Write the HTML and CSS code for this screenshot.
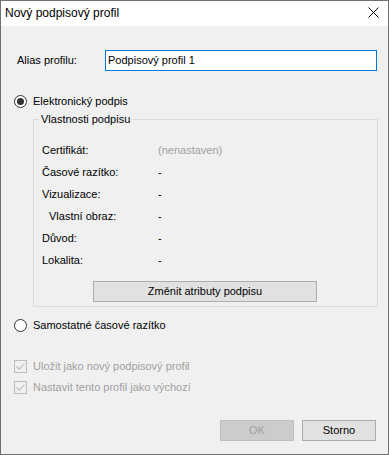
FILE: index.html
```html
<!DOCTYPE html>
<html lang="cs">
  <head>
    <meta charset="UTF-8" />
    <meta name="viewport" content="width=device-width, initial-scale=1.0" />
    <title>Nový podpisový profil</title>
    <link rel="stylesheet" href="styles.css">
  </head>
  <body>
    <div class="window">
      <div class="titlebar">
        <span class="title">Nový podpisový profil</span>
        <svg class="close" width="11" height="11" viewBox="0 0 11 11">
          <path d="M0.5 0.5 L10.5 10.5 M10.5 0.5 L0.5 10.5" stroke="#000" stroke-width="1" fill="none"/>
        </svg>
      </div>

      <div class="content">
        <div class="alias-row">
          <label class="alias-label">Alias profilu:</label>
          <div class="textbox">Podpisový profil 1</div>
        </div>

        <div class="option-row first-radio">
          <span class="radio checked"></span>
          <span>Elektronický podpis</span>
        </div>

        <fieldset class="group">
          <legend>Vlastnosti podpisu</legend>
          <div class="props">
            <span>Certifikát:</span><span class="muted">(nenastaven)</span>
            <span>Časové razítko:</span><span>-</span>
            <span>Vizualizace:</span><span>-</span>
            <span class="indent">Vlastní obraz:</span><span>-</span>
            <span>Důvod:</span><span>-</span>
            <span>Lokalita:</span><span>-</span>
          </div>
          <div class="group-actions">
            <div class="btn wide">Změnit atributy podpisu</div>
          </div>
        </fieldset>

        <div class="option-row second-radio">
          <span class="radio"></span>
          <span>Samostatné časové razítko</span>
        </div>

        <div class="option-row check-row first-check disabled">
          <span class="checkbox">
            <svg width="11" height="11" viewBox="0 0 11 11">
              <path d="M1.5 5.5 L4.2 8.2 L9.5 2.5" stroke="#bcbcbc" stroke-width="1.1" fill="none"/>
            </svg>
          </span>
          <span>Uložit jako nový podpisový profil</span>
        </div>

        <div class="option-row check-row second-check disabled">
          <span class="checkbox">
            <svg width="11" height="11" viewBox="0 0 11 11">
              <path d="M1.5 5.5 L4.2 8.2 L9.5 2.5" stroke="#bcbcbc" stroke-width="1.1" fill="none"/>
            </svg>
          </span>
          <span>Nastavit tento profil jako výchozí</span>
        </div>

        <div class="dialog-buttons">
          <div class="btn disabled-btn">OK</div>
          <div class="btn">Storno</div>
        </div>
      </div>
    </div>
  </body>
</html>
```

FILE: styles.css
```css
body {
  margin: 0;
  font-family: "Liberation Sans", Arial, sans-serif;
  font-size: 11px;
  color: #000;
}

.window {
  width: 389px;
  height: 455px;
  box-sizing: border-box;
  border: 1px solid #707070;
  display: flex;
  flex-direction: column;
  background: #f0f0f0;
}

.titlebar {
  height: 25px;
  background: #fff;
  display: flex;
  align-items: center;
  justify-content: space-between;
  padding: 0 9px 0 4px;
  flex-shrink: 0;
}

.title {
  font-size: 12px;
  line-height: 16px;
  margin-top: -1px;
}

.close {
  margin-top: -2px;
}

.content {
  flex: 1;
  display: flex;
  flex-direction: column;
  line-height: 13px;
}

.alias-row {
  display: flex;
  align-items: center;
  margin: 24px 0 0 16px;
}

.alias-label {
  width: 88px;
}

.textbox {
  width: 272px;
  height: 21px;
  box-sizing: border-box;
  border: 1px solid #0078d7;
  background: #fff;
  padding: 3px 0 0 2px;
}

.option-row {
  display: flex;
  align-items: center;
  height: 13px;
  margin-left: 13px;
  gap: 6px;
}

.first-radio {
  margin-top: 24px;
}

.second-radio {
  margin-top: 12px;
}

.radio {
  width: 13px;
  height: 13px;
  box-sizing: border-box;
  border: 1px solid #333;
  border-radius: 50%;
  background: #fff;
  display: flex;
  align-items: center;
  justify-content: center;
}

.radio.checked::after {
  content: "";
  width: 7px;
  height: 7px;
  border-radius: 50%;
  background: #333;
}

.group {
  margin: 5px 0 0 32px;
  width: 345px;
  box-sizing: border-box;
  border: 1px solid #dcdcdc;
  padding: 0 0 4px 8px;
  min-width: 0;
}

.group legend {
  padding: 0 2px;
  margin-left: -3px;
  line-height: 13px;
}

.props {
  display: grid;
  grid-template-columns: 116px auto;
  grid-auto-rows: 22px;
  align-items: center;
  margin-top: 13px;
}

.indent {
  padding-left: 7px;
}

.muted {
  color: #a0a0a0;
}

.group-actions {
  display: flex;
  justify-content: center;
  margin: 10px 0 0 -9px;
}

.btn {
  width: 74px;
  height: 21px;
  box-sizing: border-box;
  border: 1px solid #adadad;
  background: #e1e1e1;
  display: flex;
  align-items: center;
  justify-content: center;
}

.btn.wide {
  width: 224px;
}

.check-row {
  color: #a0a0a0;
}

.first-check {
  margin-top: 28px;
}

.second-check {
  margin-top: 8px;
}

.checkbox {
  width: 13px;
  height: 13px;
  box-sizing: border-box;
  border: 1px solid #bcbcbc;
  display: flex;
  align-items: center;
  justify-content: center;
}

.dialog-buttons {
  display: flex;
  justify-content: flex-end;
  gap: 8px;
  margin: 26px 12px 0 0;
}

.btn.disabled-btn {
  background: #cccccc;
  border-color: #bfbfbf;
  color: #a0a0a0;
}
```
